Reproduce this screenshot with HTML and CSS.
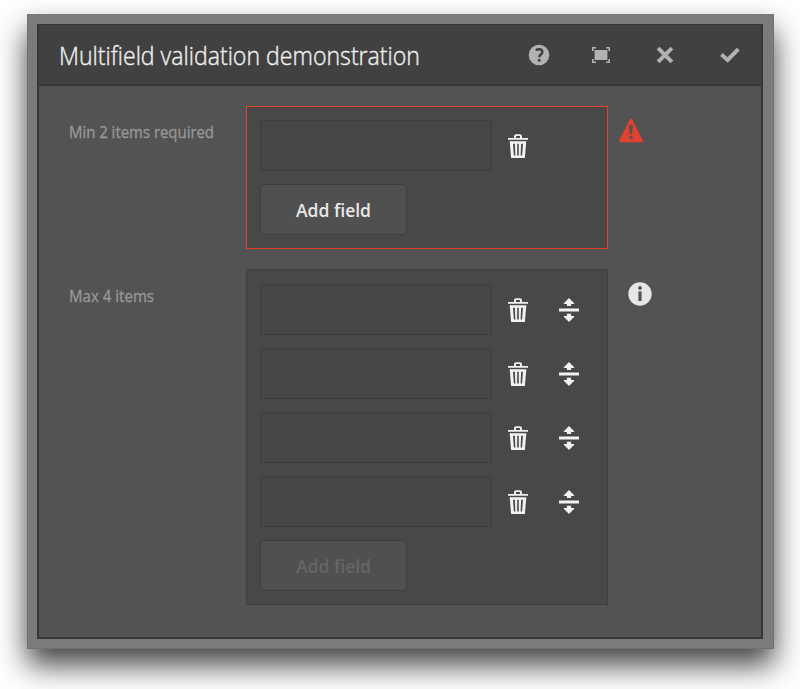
FILE: index.html
```html
<!DOCTYPE html>
<html lang="en">
<head>
<meta charset="utf-8">
<title>Multifield validation demonstration</title>
<link rel="stylesheet" href="styles.css">
</head>
<body>
<svg width="0" height="0" class="defs" aria-hidden="true">
  <symbol id="trash" viewBox="0 0 20 24"><path fill-rule="evenodd" d="M0 5.7V4.1H6V2.3Q6 .2 8.1 .2H11.8Q14 .2 14 2.3V4.1H20V5.7ZM8 4.1H12V2.1H8Z"/><path fill-rule="evenodd" d="M1.7 7.2H18.3L16.9 24H3.1ZM5 9.7L5.9 21.5H7.4L6.9 9.7ZM9.2 9.7V21.5H10.8V9.7ZM13.1 9.7L12.6 21.5H14.1L15 9.7Z"/></symbol>
  <symbol id="move" viewBox="0 0 20 24"><rect y="10.4" width="20" height="3.1" rx=".5"/><path d="M10 0L15.2 5.3V6H12.1V8.1H7.9V6H4.8V5.3ZM10 24L15.2 18.7V18H12.1V15.7H7.9V18H4.8V18.7Z"/></symbol>
</svg>
<div class="frame">
  <div class="dialog">
    <header class="header">
      <h1 class="title"><svg width="366" height="40"><text x="0" y="28.5" textLength="361" lengthAdjust="spacingAndGlyphs">Multifield validation demonstration</text></svg></h1>
      <div class="actions">
        <svg width="22" height="22" viewBox="0 0 22 22"><circle cx="11" cy="11" r="10.3"/><path class="cut" d="M7.8 6.2Q9 5.3 10.9 5.3C13.1 5.3 14.3 6.3 14.3 8C14.3 10.4 11.2 10.5 11.2 13.3"/><circle class="dot" cx="11.2" cy="16.2" r="1.5"/></svg>
        <svg width="20" height="18" viewBox="0 0 20 18"><path d="M3.6 4H16.4V14H3.6Z"/><path class="line" d="M1.8 5V1.8H5M15 1.8H18.2V5M18.2 13V16.2H15M5 16.2H1.8V13"/></svg>
        <svg width="18" height="18" viewBox="0 0 18 18"><path class="thick" d="M2.1 2.1L15.9 15.9M15.9 2.1L2.1 15.9"/></svg>
        <svg width="22" height="18" viewBox="0 0 22 18"><path class="thick" d="M2.4 8.6L8.6 14L19.3 3.2"/></svg>
      </div>
    </header>
    <main class="form">
      <div class="label"><svg width="150" height="24"><text x="0" y="17" textLength="145" lengthAdjust="spacingAndGlyphs">Min 2 items required</text></svg></div>
      <section class="panel invalid">
        <div class="row"><div class="field"></div><svg class="icon"><use href="#trash"/></svg></div>
        <button class="add"><svg width="80" height="28"><text x="2" y="20.5" textLength="75" lengthAdjust="spacingAndGlyphs">Add field</text></svg></button>
      </section>
      <svg class="status alert" width="24" height="25" viewBox="0 0 24 25"><path d="M10.8 1.4Q12 -.8 13.2 1.4L23.8 22.4Q24.6 24.2 22.8 24.2H1.2Q-.6 24.2 .2 22.4Z"/><path class="hole" d="M10.2 8Q10.2 6.7 12 6.7T13.8 8L13.2 16H10.8Z"/><circle class="hole" cx="12" cy="19.5" r="1.8"/></svg>

      <div class="label second"><svg width="150" height="24"><text x="0" y="17" textLength="85" lengthAdjust="spacingAndGlyphs">Max 4 items</text></svg></div>
      <section class="panel">
        <div class="row"><div class="field"></div><svg class="icon"><use href="#trash"/></svg><svg class="icon"><use href="#move"/></svg></div>
        <div class="row"><div class="field"></div><svg class="icon"><use href="#trash"/></svg><svg class="icon"><use href="#move"/></svg></div>
        <div class="row"><div class="field"></div><svg class="icon"><use href="#trash"/></svg><svg class="icon"><use href="#move"/></svg></div>
        <div class="row"><div class="field"></div><svg class="icon"><use href="#trash"/></svg><svg class="icon"><use href="#move"/></svg></div>
        <button class="add" disabled><svg width="80" height="28"><text x="2" y="20.5" textLength="75" lengthAdjust="spacingAndGlyphs">Add field</text></svg></button>
      </section>
      <svg class="status info" width="24" height="24" viewBox="0 0 24 24"><circle cx="12" cy="12" r="11.7"/><circle class="hole" cx="12" cy="6" r="1.9"/><path class="hole" d="M10.4 9.4H13.6V19H10.4Z"/></svg>
    </main>
  </div>
</div>
</body>
</html>
```
FILE: styles.css
```css
* { box-sizing: border-box; }
body {
  margin: 0;
  height: 689px;
  overflow: hidden;
  background: #fff;
  padding: 14px 0 0 27px;
  font-family: "Open Sans", "Noto Sans", sans-serif;
}
svg { display: block; flex: none; overflow: visible; }
.defs { position: absolute; }
.frame {
  width: 747px;
  height: 635px;
  background: #7b7b7b;
  border: 1px solid #727272;
  border-width: 0 1px 1px;
  padding: 10px 10px 9px 9px;
  box-shadow: 0 16px 28px rgba(0, 0, 0, .74);
}
.dialog {
  height: 615px;
  width: 726px;
  background: #535353;
  border: 2px solid #373737;
  border-top-width: 1px;
}
.header {
  height: 61px;
  display: flex;
  justify-content: space-between;
  background: #414141;
  border-bottom: 2px solid #373737;
  padding: 11px 20px 0 20px;
}
.title { margin: 0; line-height: 1.5; }
.title text { font-size: 26px; font-weight: 300; fill: #f0f0f0; stroke: #f0f0f0; stroke-width: .4px; }
.actions {
  display: flex;
  align-items: center;
  gap: 45px;
  height: 38px;
  fill: #b2b2b2;
}
.actions svg:nth-child(1) { margin-right: -4px; }
.cut { fill: none; stroke: #414141; stroke-width: 2.6; }
.dot { fill: #414141; }
.line { fill: none; stroke: #b2b2b2; stroke-width: 1.6; }
.thick { fill: none; stroke: #b2b2b2; stroke-width: 4; }
.form {
  display: grid;
  grid-template-columns: 177px 362px 1fr;
  row-gap: 20px;
  align-items: start;
  padding: 20px 0 0 30px;
}
.label { padding-top: 15px; }
.label.second { padding-top: 16px; }
.label text { font-size: 16px; font-weight: 400; fill: #989898; stroke: #989898; stroke-width: .3px; }
.panel {
  display: flex;
  flex-direction: column;
  align-items: flex-start;
  gap: 13px;
  padding: 14px 13px 13px;
  background: #484848;
  border: 1px solid #3f3f3f;
}
.panel.invalid { border-color: #e23f30; height: 143px; padding-top: 13px; }
.row { display: flex; align-items: center; gap: 31px; height: 51px; }
.field {
  width: 232px;
  height: 51px;
  background: #464646;
  border: 1px solid #3d3d3d;
  margin-right: -15px;
}
.icon { width: 20px; height: 24px; fill: #f2f2f2; margin-top: 1px; }
.add {
  width: 147px;
  height: 51px;
  flex: none;
  display: flex;
  align-items: center;
  justify-content: center;
  padding: 0;
  background: #505050;
  border: 1px solid #3e3e3e;
  border-radius: 4px;
  font-family: inherit;
}
.add text { font-size: 18.5px; font-weight: 600; fill: #e8e8e8; }
.add:disabled text { fill: #666; }
.status { margin: 12px 0 0 11px; }
.alert { fill: #e24132; }
.info { fill: #e6e6e6; margin: 13px 0 0 20px; }
.hole { fill: #535353; }
```
